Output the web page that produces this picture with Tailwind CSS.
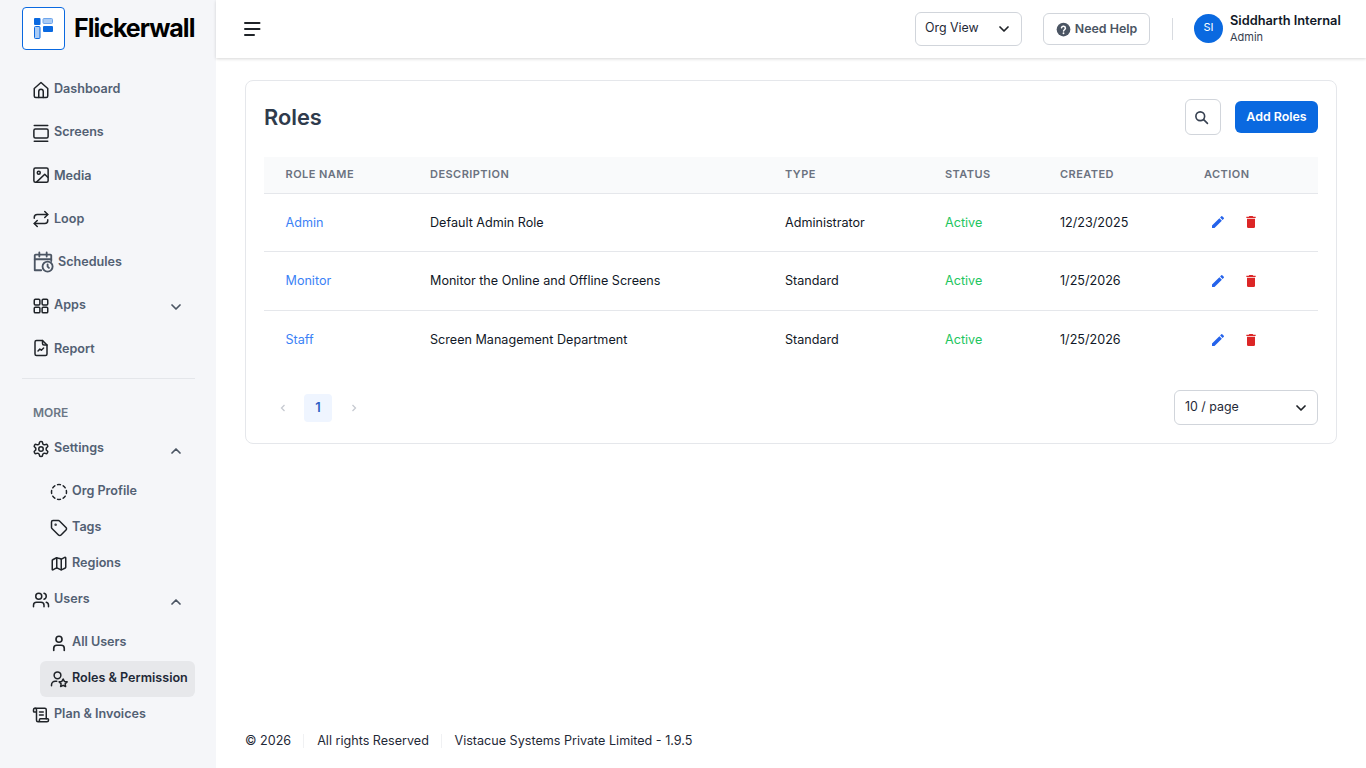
<!DOCTYPE html>
<html lang="en">
<head>
<meta charset="UTF-8">
<title>Roles</title>
<script src="https://cdn.jsdelivr.net/npm/@tailwindcss/browser@4"></script>
</head>
<body class="font-['Inter',sans-serif] bg-white text-[12.6px] text-[#1f2937]">
<div class="flex h-[768px] w-[1366px] overflow-hidden">

  <!-- sidebar -->
  <aside class="w-[216px] shrink-0 bg-[#f5f6f9] pl-[22px] pr-[21px] pt-[7px]">
    <div class="flex items-center h-[43px]">
      <div class="w-[43px] h-[43px] shrink-0 rounded bg-white border border-[#0a69e0] flex items-center justify-center">
        <svg width="19" height="21" viewBox="0 0 19 21"><rect x="0" y="0" width="6.5" height="7" rx="1" fill="#0a69e0"/><rect x="0.5" y="8.5" width="5.5" height="12" rx="1" fill="#a9cbf5" stroke="#0a69e0"/><rect x="9" y="0.5" width="9.5" height="5" rx="1" fill="#a9cbf5" stroke="#6fa6ec"/><rect x="9" y="8" width="10" height="6" rx="1" fill="#0a69e0"/></svg>
      </div>
      <span class="ml-[9px] text-[25px] font-bold tracking-[-1px] text-black">Flickerwall</span>
    </div>

    <nav class="mt-[17px] text-[12.6px] font-semibold text-[#526073]">
      <a class="flex items-center h-[43.3px] pl-[10px]">
        <svg class="w-[18px] h-[18px] mt-[3px] text-[#1f2328]" viewBox="0 0 24 24" fill="none" stroke="currentColor" stroke-width="2" stroke-linecap="round" stroke-linejoin="round"><path d="M3 10 12 2l9 8v10a2 2 0 0 1-2 2H5a2 2 0 0 1-2-2z"/><path d="M9 22v-8a3 3 0 0 1 6 0v8"/></svg>
        <span class="ml-[4px] mt-[2px]">Dashboard</span>
      </a>
      <a class="flex items-center h-[43.3px] pl-[10px]">
        <svg class="w-[18px] h-[18px] mt-[2px] text-[#1f2328]" viewBox="0 0 24 24" fill="none" stroke="currentColor" stroke-width="2" stroke-linecap="round" stroke-linejoin="round"><path d="M3 2h18M3 23h18"/><rect x="2.5" y="6.5" width="19" height="12" rx="2"/></svg>
        <span class="ml-[4px]">Screens</span>
      </a>
      <a class="flex items-center h-[43.3px] pl-[10px]">
        <svg class="w-[18px] h-[18px] text-[#1f2328]" viewBox="0 0 24 24" fill="none" stroke="currentColor" stroke-width="2" stroke-linecap="round" stroke-linejoin="round"><rect x="2.5" y="2.5" width="19" height="19" rx="2"/><circle cx="9" cy="9" r="2"/><path d="m21 15-4-4L6 21.5"/></svg>
        <span class="ml-[4px] mt-[2px]">Media</span>
      </a>
      <a class="flex items-center h-[43.3px] pl-[10px]">
        <svg class="w-[18px] h-[18px] mt-[1px] text-[#1f2328]" viewBox="0 0 24 24" fill="none" stroke="currentColor" stroke-width="2" stroke-linecap="round" stroke-linejoin="round"><path d="m17 2 4 4-4 4"/><path d="M3 11v-1a4 4 0 0 1 4-4h14"/><path d="m7 22-4-4 4-4"/><path d="M21 13v1a4 4 0 0 1-4 4H3"/></svg>
        <span class="ml-[4px] mt-[2px]">Loop</span>
      </a>
      <a class="flex items-center h-[43.3px] pl-[10px]">
        <svg class="w-[22px] h-[22px] text-[#4b5563]" viewBox="0 0 24 24" fill="none" stroke="currentColor" stroke-width="2" stroke-linecap="round" stroke-linejoin="round"><path d="M10 21H3V5a1 1 0 0 1 1-1h16a1 1 0 0 1 1 1v6"/><path d="M8 1.5V6M16 1.5V6M3 9h18"/><circle cx="17" cy="17" r="5.5"/><path d="M17 14.5V17l1.5 1.5"/></svg>
        <span class="ml-[4px] mt-[2px]">Schedules</span>
      </a>
      <a class="flex items-center h-[43.3px] pl-[10px]">
        <svg class="w-[18px] h-[18px] mt-[2px] text-[#1f2328]" viewBox="0 0 24 24" fill="none" stroke="currentColor" stroke-width="2" stroke-linecap="round" stroke-linejoin="round"><rect x="3" y="3" width="7.5" height="7.5" rx="1.5"/><rect x="13.5" y="3" width="7.5" height="7.5" rx="1.5"/><rect x="3" y="13.5" width="7.5" height="7.5" rx="1.5"/><rect x="13.5" y="13.5" width="7.5" height="7.5" rx="1.5"/></svg>
        <span class="ml-[4px]">Apps</span>
        <svg class="w-[12px] h-[12px] ml-auto mr-[13px] mt-[3px] text-[#4b5563]" viewBox="0 0 24 24" fill="none" stroke="currentColor" stroke-width="3.5" stroke-linecap="round" stroke-linejoin="round"><path d="m4 8 8 8 8-8"/></svg>
      </a>
      <a class="flex items-center h-[43.3px] pl-[10px]">
        <svg class="w-[18px] h-[18px] text-[#1f2328]" viewBox="0 0 24 24" fill="none" stroke="currentColor" stroke-width="2" stroke-linecap="round" stroke-linejoin="round"><path d="M14 2H6a2 2 0 0 0-2 2v16a2 2 0 0 0 2 2h12a2 2 0 0 0 2-2V8z"/><path d="M14 2v4a2 2 0 0 0 2 2h4"/><path d="m8 16 2.5-2.5 2 1.5 3-3"/></svg>
        <span class="ml-[4px] mt-[2px]">Report</span>
      </a>

      <div class="border-t border-[#e4e6ea] mt-[8px]"></div>
      <p class="pl-[11px] mt-[26px] leading-[16px] text-[12px] font-semibold text-[#6b7685]">MORE</p>

      <a class="flex items-center h-[43.3px] mt-[6px] pl-[10px]">
        <svg class="w-[18px] h-[18px] mt-[1px] text-[#1f2328]" viewBox="0 0 24 24" fill="none" stroke="currentColor" stroke-width="2" stroke-linecap="round" stroke-linejoin="round"><path d="M12.22 2h-.44a2 2 0 0 0-2 2v.18a2 2 0 0 1-1 1.73l-.43.25a2 2 0 0 1-2 0l-.15-.08a2 2 0 0 0-2.73.73l-.22.38a2 2 0 0 0 .73 2.73l.15.1a2 2 0 0 1 1 1.72v.51a2 2 0 0 1-1 1.74l-.15.09a2 2 0 0 0-.73 2.73l.22.38a2 2 0 0 0 2.73.73l.15-.08a2 2 0 0 1 2 0l.43.25a2 2 0 0 1 1 1.73V20a2 2 0 0 0 2 2h.44a2 2 0 0 0 2-2v-.18a2 2 0 0 1 1-1.73l.43-.25a2 2 0 0 1 2 0l.15.08a2 2 0 0 0 2.73-.73l.22-.39a2 2 0 0 0-.73-2.73l-.15-.08a2 2 0 0 1-1-1.74v-.5a2 2 0 0 1 1-1.74l.15-.09a2 2 0 0 0 .73-2.73l-.22-.38a2 2 0 0 0-2.73-.73l-.15.08a2 2 0 0 1-2 0l-.43-.25a2 2 0 0 1-1-1.73V4a2 2 0 0 0-2-2z"/><circle cx="12" cy="12" r="3"/></svg>
        <span class="ml-[4px]">Settings</span>
        <svg class="w-[12px] h-[12px] ml-auto mr-[13px] mt-[4px] text-[#4b5563]" viewBox="0 0 24 24" fill="none" stroke="currentColor" stroke-width="3.5" stroke-linecap="round" stroke-linejoin="round"><path d="m4 16 8-8 8 8"/></svg>
      </a>
      <div class="mt-[3.5px] flex flex-col">
        <a class="flex items-center h-9 pl-[10px] ml-[18px]">
          <svg class="w-[18px] h-[18px] mt-[1px] text-[#1f2328]" viewBox="0 0 24 24" fill="none" stroke="currentColor" stroke-width="2" stroke-linecap="round" stroke-linejoin="round"><path d="M10.1 2.18a9.9 9.9 0 0 1 3.8 0M17.6 3.7a10 10 0 0 1 2.7 2.7M21.82 10.1a9.9 9.9 0 0 1 0 3.8M20.3 17.6a10 10 0 0 1-2.7 2.7M13.9 21.82a9.9 9.9 0 0 1-3.8 0M6.4 20.3a10 10 0 0 1-2.7-2.7M2.18 13.9a9.9 9.9 0 0 1 0-3.8M3.7 6.4a10 10 0 0 1 2.7-2.7"/></svg>
          <span class="ml-[4px]">Org Profile</span>
        </a>
        <a class="flex items-center h-9 pl-[10px] ml-[18px]">
          <svg class="w-[18px] h-[18px] text-[#1f2328]" viewBox="0 0 24 24" fill="none" stroke="currentColor" stroke-width="2" stroke-linecap="round" stroke-linejoin="round"><path d="M12.6 2.6A2 2 0 0 0 11.2 2H4a2 2 0 0 0-2 2v7.2a2 2 0 0 0 .6 1.4l8.7 8.7a2.4 2.4 0 0 0 3.4 0l6.6-6.6a2.4 2.4 0 0 0 0-3.4z"/><circle cx="7.5" cy="7.5" r=".6" fill="currentColor"/></svg>
          <span class="ml-[4px]">Tags</span>
        </a>
        <a class="flex items-center h-9 pl-[10px] ml-[18px]">
          <svg class="w-[18px] h-[18px] mt-[1px] text-[#1f2328]" viewBox="0 0 24 24" fill="none" stroke="currentColor" stroke-width="2" stroke-linecap="round" stroke-linejoin="round"><path d="M14.1 5.1a2 2 0 0 0 1.8 0l3.7-1.9A1 1 0 0 1 21 4.1v12.3a1 1 0 0 1-.6.9l-4.5 2.3a2 2 0 0 1-1.8 0l-4.2-2.1a2 2 0 0 0-1.8 0l-3.7 1.9A1 1 0 0 1 3 19.5V7.2a1 1 0 0 1 .6-.9l4.5-2.3a2 2 0 0 1 1.8 0z"/><path d="M15 5.5v14M9 3.5v14"/></svg>
          <span class="ml-[4px]">Regions</span>
        </a>
      </div>
      <a class="flex items-center h-[36px] pl-[10px]">
        <svg class="w-[18px] h-[18px] text-[#1f2328]" viewBox="0 0 24 24" fill="none" stroke="currentColor" stroke-width="2" stroke-linecap="round" stroke-linejoin="round"><path d="M16 21v-2a4 4 0 0 0-4-4H6a4 4 0 0 0-4 4v2"/><circle cx="9" cy="7" r="4"/><path d="M22 21v-2a4 4 0 0 0-3-3.87"/><path d="M16 3.13a4 4 0 0 1 0 7.75"/></svg>
        <span class="ml-[4px]">Users</span>
        <svg class="w-[12px] h-[12px] ml-auto mr-[13px] mt-[4px] text-[#4b5563]" viewBox="0 0 24 24" fill="none" stroke="currentColor" stroke-width="3.5" stroke-linecap="round" stroke-linejoin="round"><path d="m4 16 8-8 8 8"/></svg>
      </a>
      <div class="mt-[7px] flex flex-col">
        <a class="flex items-center h-9 pl-[10px] ml-[18px]">
          <svg class="w-[18px] h-[18px] mt-[1px] text-[#1f2328]" viewBox="0 0 24 24" fill="none" stroke="currentColor" stroke-width="2.2" stroke-linecap="round" stroke-linejoin="round"><circle cx="12" cy="7" r="4"/><path d="M5 22v-3a4 4 0 0 1 4-4h6a4 4 0 0 1 4 4v3"/></svg>
          <span class="ml-[4px]">All Users</span>
        </a>
        <a class="flex items-center h-9 pl-[10px] ml-[18px] rounded-md bg-[#e7e8eb] text-[#1f2937]">
          <svg class="w-[18px] h-[18px] mt-[1px] text-[#1f2328]" viewBox="0 0 24 24" fill="none" stroke="currentColor" stroke-width="2" stroke-linecap="round" stroke-linejoin="round"><circle cx="10" cy="7" r="4.5"/><path d="M2 21v-1a5 5 0 0 1 5-5h2"/><path d="m17.5 12 1.7 3.2 3.6.6-2.6 2.6.6 3.6-3.3-1.6-3.3 1.6.6-3.6-2.6-2.6 3.6-.6z"/></svg>
          <span class="ml-[4px]">Roles &amp; Permission</span>
        </a>
      </div>
      <a class="flex items-center h-9 pl-[10px]">
        <svg class="w-[18px] h-[18px] mt-[1px] text-[#1f2328]" viewBox="0 0 24 24" fill="none" stroke="currentColor" stroke-width="2" stroke-linecap="round" stroke-linejoin="round"><path d="M15 12h-5M15 8h-5"/><path d="M19 17V5a2 2 0 0 0-2-2H4"/><path d="M8 21h12a2 2 0 0 0 2-2v-1a1 1 0 0 0-1-1H11a1 1 0 0 0-1 1v1a2 2 0 1 1-4 0V5a2 2 0 1 0-4 0v2a1 1 0 0 0 1 1h3"/></svg>
        <span class="ml-[4px]">Plan &amp; Invoices</span>
      </a>
    </nav>
  </aside>

  <div class="flex-1 flex flex-col min-w-0">
    <!-- top bar -->
    <header class="h-[58px] shrink-0 flex items-center pl-[28px] pr-[24px] bg-white shadow-[0_1px_3px_rgba(0,0,0,0.16)]">
      <svg class="w-[17px] h-[16px]" viewBox="0 0 17 16" fill="none" stroke="#1f2328" stroke-width="2" stroke-linecap="round"><path d="M1 2h14.5M1 8h14.5M1 14h9"/></svg>
      <div class="ml-auto w-[107px] h-[34px] rounded-md border border-[#d1d5db] flex items-center justify-between pl-[9px] pr-[11px] text-[12.4px] text-[#1f2937]">
        <span class="-mt-[2px]">Org View</span>
        <svg class="w-[12px] h-[12px]" viewBox="0 0 24 24" fill="none" stroke="#1f2328" stroke-width="3.5" stroke-linecap="round" stroke-linejoin="round"><path d="m4 8 8 8 8-8"/></svg>
      </div>
      <div class="ml-[21px] w-[107px] h-[32px] rounded-md border border-[#d1d5db] flex items-center justify-center gap-[4px] text-[12.4px] font-semibold text-[#4b5563]">
        <svg class="w-[15px] h-[15px]" viewBox="0 0 24 24"><circle cx="12" cy="12" r="11" fill="#4b5563"/><path d="M8.8 9.2a3.2 3.2 0 0 1 6.3.8c0 2-3 2.6-3 4.4" fill="none" stroke="#fff" stroke-width="2.4" stroke-linecap="round"/><circle cx="12" cy="18" r="1.5" fill="#fff"/></svg>
        <span>Need Help</span>
      </div>
      <div class="ml-[22px] w-px h-[22px] bg-[#d8dbe0]"></div>
      <div class="ml-[21px] -mt-[1px] w-[29px] h-[29px] rounded-full bg-[#0a69e0] text-white text-[11px] flex items-center justify-center pb-[2px]">SI</div>
      <div class="ml-[7px] flex flex-col w-[112px]">
        <span class="text-[12.8px] leading-[16px] font-semibold text-[#111827] whitespace-nowrap">Siddharth Internal</span>
        <span class="text-[11px] leading-[17px] text-[#374151]">Admin</span>
      </div>
    </header>

    <main class="flex-1 px-[29px] pt-[22px]">
      <section class="w-[1092px] h-[364px] rounded-lg border border-[#e5e7eb] px-[18px]">
        <div class="flex items-center h-[72px] mb-[4px]">
          <h1 class="text-[21.8px] font-semibold text-[#2f3b4c]">Roles</h1>
          <button class="ml-auto w-[36px] h-[36px] rounded-md border border-[#d1d5db] flex items-center justify-center pr-[4px]">
            <svg class="w-[15px] h-[15px]" viewBox="0 0 24 24" fill="none" stroke="#374151" stroke-width="2.6" stroke-linecap="round"><circle cx="10" cy="10" r="7"/><path d="m15.5 15.5 6 6"/></svg>
          </button>
          <button class="ml-[14px] w-[83px] h-[32px] rounded-md bg-[#0a69e0] text-white text-[12.4px] font-semibold">Add Roles</button>
        </div>

        <table class="w-full table-fixed border-collapse text-left">
          <thead>
            <tr class="h-[36px] bg-[#f9fafb] border-b border-[#e5e7eb] text-[11px] font-semibold tracking-[0.45px] text-[#6b7280]">
              <th class="w-[145px] pl-[21.5px] pb-[2px] font-semibold">ROLE NAME</th>
              <th class="w-[21px]"></th>
              <th class="w-[355px] pb-[2px] font-semibold">DESCRIPTION</th>
              <th class="w-[160px] pb-[2px] font-semibold">TYPE</th>
              <th class="w-[115px] pb-[2px] font-semibold">STATUS</th>
              <th class="w-[144px] pb-[2px] font-semibold">CREATED</th>
              <th class="pb-[2px] font-semibold">ACTION</th>
            </tr>
          </thead>
          <tbody>
            <tr class="h-[58px] border-b border-[#e5e7eb]">
              <td class="pl-[21.5px] pt-[2px] text-[#3b82f6]" colspan="2">Admin</td>
              <td class="pt-[2px] text-[#111827]">Default Admin Role</td>
              <td class="pt-[2px] text-[#111827]">Administrator</td>
              <td class="pt-[2px] text-[#22c55e]">Active</td>
              <td class="pt-[2px] text-[#111827]">12/23/2025</td>
              <td>
                <div class="flex items-center gap-[17px] pl-[6px]">
                  <svg class="w-[16px] h-[16px]" viewBox="0 0 24 24" fill="#2563eb"><path d="M3 17.25V21h3.75L17.81 9.94l-3.75-3.75zM20.71 7.04a1 1 0 0 0 0-1.41l-2.34-2.34a1 1 0 0 0-1.41 0l-1.83 1.83 3.75 3.75z"/></svg>
                  <svg class="w-[16px] h-[16px]" viewBox="0 0 24 24" fill="#dc2626"><path d="M6 19a2 2 0 0 0 2 2h8a2 2 0 0 0 2-2V7H6zM19 4h-3.5l-1-1h-5l-1 1H5v2h14z"/></svg>
                </div>
              </td>
            </tr>
            <tr class="h-[59px] border-b border-[#e5e7eb]">
              <td class="pl-[21.5px] pt-[2px] text-[#3b82f6]" colspan="2">Monitor</td>
              <td class="pt-[2px] text-[#111827]">Monitor the Online and Offline Screens</td>
              <td class="pt-[2px] text-[#111827]">Standard</td>
              <td class="pt-[2px] text-[#22c55e]">Active</td>
              <td class="pt-[2px] text-[#111827]">1/25/2026</td>
              <td>
                <div class="flex items-center gap-[17px] pl-[6px]">
                  <svg class="w-[16px] h-[16px]" viewBox="0 0 24 24" fill="#2563eb"><path d="M3 17.25V21h3.75L17.81 9.94l-3.75-3.75zM20.71 7.04a1 1 0 0 0 0-1.41l-2.34-2.34a1 1 0 0 0-1.41 0l-1.83 1.83 3.75 3.75z"/></svg>
                  <svg class="w-[16px] h-[16px]" viewBox="0 0 24 24" fill="#dc2626"><path d="M6 19a2 2 0 0 0 2 2h8a2 2 0 0 0 2-2V7H6zM19 4h-3.5l-1-1h-5l-1 1H5v2h14z"/></svg>
                </div>
              </td>
            </tr>
            <tr class="h-[59px]">
              <td class="pl-[21.5px] pt-[2px] text-[#3b82f6]" colspan="2">Staff</td>
              <td class="pt-[2px] text-[#111827]">Screen Management Department</td>
              <td class="pt-[2px] text-[#111827]">Standard</td>
              <td class="pt-[2px] text-[#22c55e]">Active</td>
              <td class="pt-[2px] text-[#111827]">1/25/2026</td>
              <td>
                <div class="flex items-center gap-[17px] pl-[6px]">
                  <svg class="w-[16px] h-[16px]" viewBox="0 0 24 24" fill="#2563eb"><path d="M3 17.25V21h3.75L17.81 9.94l-3.75-3.75zM20.71 7.04a1 1 0 0 0 0-1.41l-2.34-2.34a1 1 0 0 0-1.41 0l-1.83 1.83 3.75 3.75z"/></svg>
                  <svg class="w-[16px] h-[16px]" viewBox="0 0 24 24" fill="#dc2626"><path d="M6 19a2 2 0 0 0 2 2h8a2 2 0 0 0 2-2V7H6zM19 4h-3.5l-1-1h-5l-1 1H5v2h14z"/></svg>
                </div>
              </td>
            </tr>
          </tbody>
        </table>

        <div class="flex items-center mt-[21px]">
          <svg class="w-[8px] h-[8px] ml-[15px]" viewBox="0 0 8 8" fill="none" stroke="#c6cad1" stroke-width="1.3"><path d="M5.5 1 2.5 4l3 3"/></svg>
          <span class="ml-[17px] w-[28px] h-[28px] rounded bg-[#eff5ff] flex items-center justify-center text-[13px] font-semibold text-[#2f5fc4]">1</span>
          <svg class="w-[8px] h-[8px] ml-[18px]" viewBox="0 0 8 8" fill="none" stroke="#c6cad1" stroke-width="1.3"><path d="M2.5 1l3 3-3 3"/></svg>
          <div class="ml-auto w-[144px] h-[35px] rounded-md border border-[#d1d5db] flex items-center justify-between pl-[10px] pr-[10px] text-[12.4px] text-[#1f2937]">
            <span>10 / page</span>
            <svg class="w-[12px] h-[12px]" viewBox="0 0 24 24" fill="none" stroke="#1f2328" stroke-width="3.5" stroke-linecap="round" stroke-linejoin="round"><path d="m4 8 8 8 8-8"/></svg>
          </div>
        </div>
      </section>
    </main>

    <footer class="h-[35px] shrink-0 pl-[29px] flex items-start text-[12.6px] text-[#1f2937]">
      <div class="flex items-center h-[16px]">
        <span>© 2026</span>
        <span class="ml-[12px] w-px h-[14px] bg-[#f0f1f3]"></span>
        <span class="ml-[13px]">All rights Reserved</span>
        <span class="ml-[12px] w-px h-[14px] bg-[#f0f1f3]"></span>
        <span class="ml-[12.5px]">Vistacue Systems Private Limited - 1.9.5</span>
      </div>
    </footer>
  </div>
</div>
</body>
</html>
